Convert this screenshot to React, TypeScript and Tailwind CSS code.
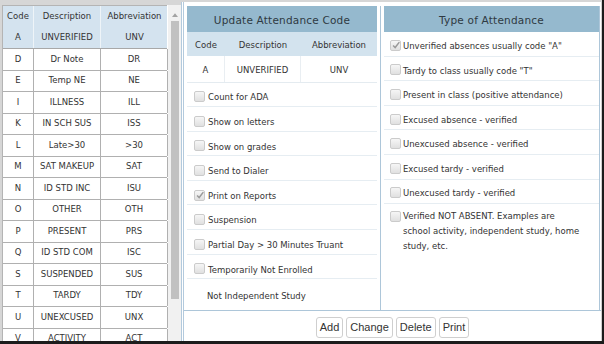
import React from "react";

interface CodeRow {
  code: string;
  description: string;
  abbreviation: string;
}

const CODES: CodeRow[] = [
  { code: "A", description: "UNVERIFIED", abbreviation: "UNV" },
  { code: "D", description: "Dr Note", abbreviation: "DR" },
  { code: "E", description: "Temp NE", abbreviation: "NE" },
  { code: "I", description: "ILLNESS", abbreviation: "ILL" },
  { code: "K", description: "IN SCH SUS", abbreviation: "ISS" },
  { code: "L", description: "Late>30", abbreviation: ">30" },
  { code: "M", description: "SAT MAKEUP", abbreviation: "SAT" },
  { code: "N", description: "ID STD INC", abbreviation: "ISU" },
  { code: "O", description: "OTHER", abbreviation: "OTH" },
  { code: "P", description: "PRESENT", abbreviation: "PRS" },
  { code: "Q", description: "ID STD COM", abbreviation: "ISC" },
  { code: "S", description: "SUSPENDED", abbreviation: "SUS" },
  { code: "T", description: "TARDY", abbreviation: "TDY" },
  { code: "U", description: "UNEXCUSED", abbreviation: "UNX" },
  { code: "V", description: "ACTIVITY", abbreviation: "ACT" },
];

const FLAGS = [
  { label: "Count for ADA", checked: false },
  { label: "Show on letters", checked: false },
  { label: "Show on grades", checked: false },
  { label: "Send to Dialer", checked: false },
  { label: "Print on Reports", checked: true },
  { label: "Suspension", checked: false },
  { label: "Partial Day > 30 Minutes Truant", checked: false },
  { label: "Temporarily Not Enrolled", checked: false },
];

const TYPES = [
  { label: 'Unverified absences usually code "A"', checked: true },
  { label: 'Tardy to class usually code "T"', checked: false },
  { label: "Present in class (positive attendance)", checked: false },
  { label: "Excused absence - verified", checked: false },
  { label: "Unexcused absence - verified", checked: false },
  { label: "Excused tardy - verified", checked: false },
  { label: "Unexcused tardy - verified", checked: false },
];

function Checkbox({ checked }: { checked: boolean }) {
  return (
    <span className="relative block shrink-0 w-[11px] h-[11px] rounded-[2px] border border-[#cbcbcb] bg-gradient-to-b from-[#f6f6f6] to-[#e0e0e0]">
      {checked && (
        <svg viewBox="0 0 12 12" className="absolute left-[0px] top-[-1px] w-[10px] h-[10px]">
          <path d="M2.5 6.5 L5 9 L10 2.5" fill="none" stroke="#9a9a9a" strokeWidth="1.8" />
        </svg>
      )}
    </span>
  );
}

function CodeTable() {
  return (
    <div className="w-[165px] border-l border-t border-[#b4b4b4] text-[8.5px] text-[#333]">
      <div className="grid grid-cols-[31px_67px_67px] h-[21.5px] bg-[#d4e3ef]">
        <div className="flex items-center justify-center border-r border-[#eef4f8]">Code</div>
        <div className="flex items-center justify-center border-r border-[#eef4f8]">Description</div>
        <div className="flex items-center justify-center">Abbreviation</div>
      </div>
      {CODES.map((row, i) => (
        <div
          key={row.code}
          className={
            i === 0
              ? "grid grid-cols-[31px_67px_67px] h-[21.5px] bg-[#d4e3ef] border-b border-[#a8a8a8]"
              : "grid grid-cols-[31px_67px_67px] h-[21.5px] bg-white border-b border-[#b0b0b0]"
          }
        >
          <div className={i === 0 ? "flex items-center justify-center border-r border-[#eef4f8]" : "flex items-center justify-center border-r border-[#b0b0b0]"}>
            {row.code}
          </div>
          <div className={i === 0 ? "flex items-center justify-center border-r border-[#eef4f8]" : "flex items-center justify-center border-r border-[#b0b0b0]"}>
            {row.description}
          </div>
          <div className={i === 0 ? "flex items-center justify-center" : "flex items-center justify-center border-r border-[#b0b0b0]"}>
            {row.abbreviation}
          </div>
        </div>
      ))}
    </div>
  );
}

function Scrollbar() {
  return (
    <div className="w-[13px] ml-[1px] bg-[#f1f1f1] flex flex-col items-center">
      <svg viewBox="0 0 8 5" className="w-[6px] h-[4px] mt-[8px]">
        <path d="M0 5 L4 0 L8 5 Z" fill="#a3a3a3" />
      </svg>
      <div className="w-[8px] h-[278px] mt-[4px] bg-[#c1c1c1]" />
    </div>
  );
}

function PanelHeader({ title }: { title: string }) {
  return (
    <div className="h-[26px] pt-[3px] bg-[#95b9ce] flex items-center justify-center text-[10.5px] text-[#2f3a42] tracking-[0.2px]">
      {title}
    </div>
  );
}

function UpdatePanel() {
  return (
    <div className="w-[194px] pr-[3px] border-r border-[#adc6d9] flex flex-col">
      <PanelHeader title="Update Attendance Code" />
      <div className="grid grid-cols-[38px_76px_76px] h-[24px] pt-[2px] bg-[#d3e3ee] text-[8.5px]">
        <div className="flex items-center justify-center">Code</div>
        <div className="flex items-center justify-center">Description</div>
        <div className="flex items-center justify-center">Abbreviation</div>
      </div>
      <div className="grid grid-cols-[38px_76px_76px] h-[26.5px] border-b border-[#e4ebf0] text-[8.5px]">
        <div className="flex items-center justify-center pt-[3px] border-r border-[#e9eef2]">A</div>
        <div className="flex items-center justify-center pt-[3px] border-r border-[#e9eef2]">UNVERIFIED</div>
        <div className="flex items-center justify-center pt-[3px]">UNV</div>
      </div>
      {FLAGS.map((f) => (
        <div key={f.label} className="h-[24.6px] pt-[5px] pl-[7px] flex items-center gap-[3px] border-b border-[#e6edf2] text-[8.5px]">
          <Checkbox checked={f.checked} />
          <span className="pt-[2px]">{f.label}</span>
        </div>
      ))}
      <div className="flex-1 flex items-center pt-[4px] pl-[20px] text-[8.5px]">Not Independent Study</div>
    </div>
  );
}

function TypePanel() {
  return (
    <div className="w-[219px] pl-[3px] flex flex-col">
      <div className="border-r border-[#adc6d9] flex flex-col h-full">
        <PanelHeader title="Type of Attendance" />
        {TYPES.map((t) => (
          <div key={t.label} className="h-[24.6px] pt-[3px] pl-[6px] flex items-center gap-[2px] border-b border-[#e6edf2] text-[8.5px]">
            <Checkbox checked={t.checked} />
            <span className="pt-[2px]">{t.label}</span>
          </div>
        ))}
        <div className="pl-[6px] pt-[5px] flex items-start gap-[2px] text-[8.5px] leading-[15px]">
          <div className="mt-[2px]">
            <Checkbox checked={false} />
          </div>
          <span>
            Verified NOT ABSENT. Examples are
            <br />
            school activity, independent study, home
            <br />
            study, etc.
          </span>
        </div>
      </div>
    </div>
  );
}

function ActionButton({ label }: { label: string }) {
  return (
    <button className="h-[21px] px-[3px] bg-white border border-[#cfcfcf] rounded-[3px] text-[11px] text-[#333] leading-none" style={{ fontFamily: '"Liberation Sans", Arial, sans-serif' }}>
      {label}
    </button>
  );
}

export default function App() {
  return (
    <div
      className="w-[604px] h-[344px] overflow-hidden bg-[#d6d6d6] border-r-2 border-b-[3px] border-[#1c1c1c] pt-[2px] flex text-[#333]"
      style={{ fontFamily: '"DejaVu Sans", Verdana, sans-serif' }}
    >
      {/* Code list with scrollbar */}
      <div className="w-[181px] pl-[2px] pt-[3px] flex items-start bg-[#d6d6d6]">
        <div className="flex bg-white h-full">
          <CodeTable />
          <Scrollbar />
        </div>
      </div>
      <div className="w-[1px] bg-[#b3cadd]" />
      <div className="w-[1px] bg-white" />

      {/* Edit area */}
      <div className="flex-1 bg-white border-l border-[#b3cadd] border-r border-r-[#cfcfcf] flex flex-col">
        <div className="flex h-[309px] pt-[4px] pl-[3px] border-b border-[#adc6d9]">
          <UpdatePanel />
          <TypePanel />
        </div>
        <div className="flex justify-center gap-[3px] pt-[6px]">
          <ActionButton label="Add" />
          <ActionButton label="Change" />
          <ActionButton label="Delete" />
          <ActionButton label="Print" />
        </div>
      </div>
    </div>
  );
}
